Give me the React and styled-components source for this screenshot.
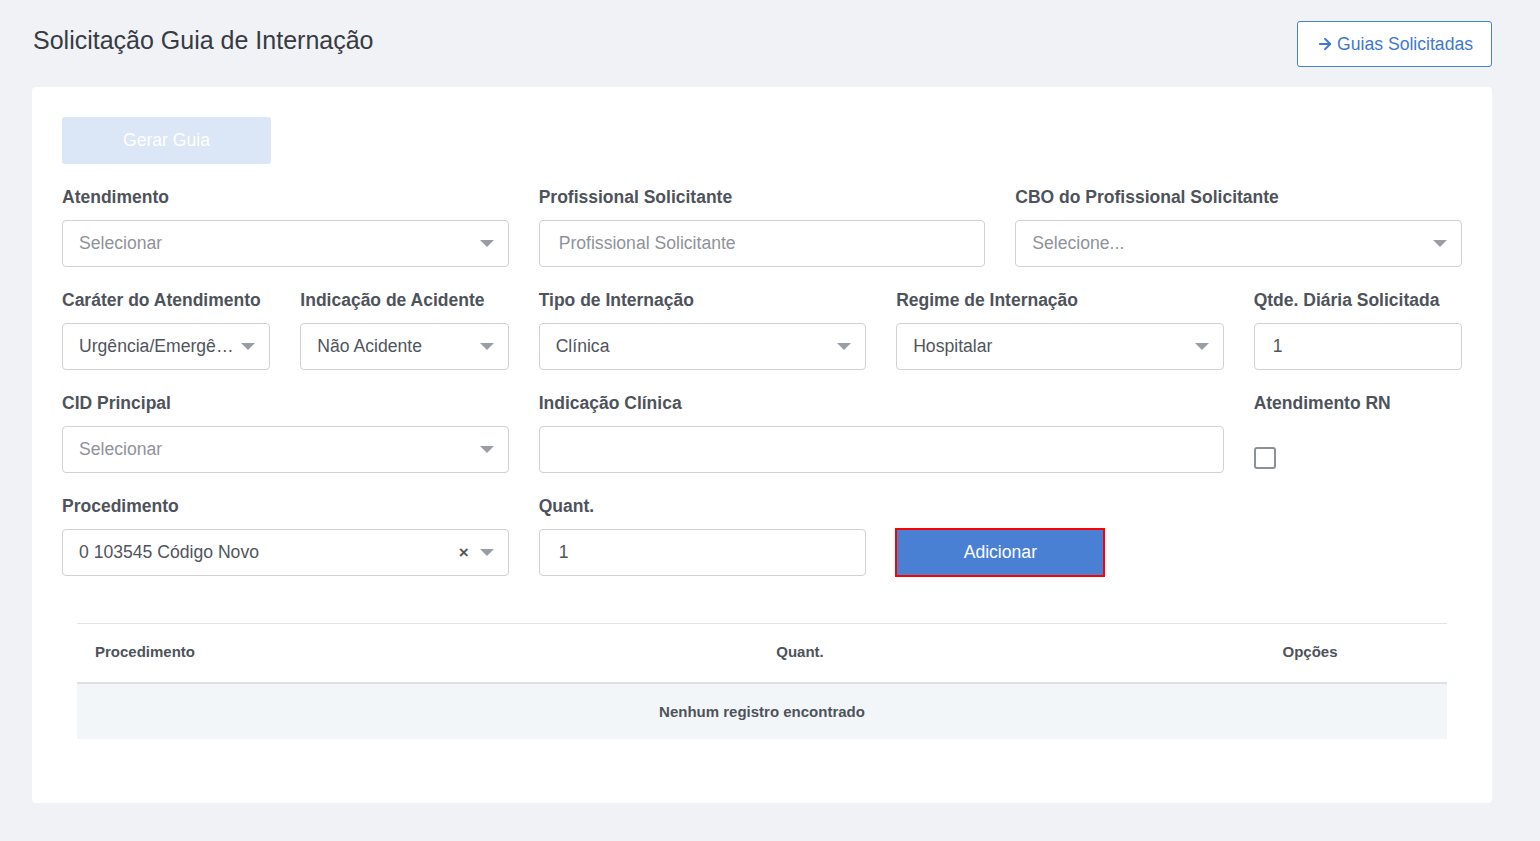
import React from 'react';
import styled, { createGlobalStyle } from 'styled-components';
import { ArrowRight } from 'lucide-react';

const GlobalStyle = createGlobalStyle`
  * { box-sizing: border-box; }
  body {
    margin: 0;
    background: #f1f2f5;
    font-family: "Liberation Sans", Arial, sans-serif;
  }
`;

const Page = styled.div`
  padding: 21px 48px 38px 32px;
  min-height: 841px;
`;

const TopBar = styled.div`
  display: flex;
  align-items: flex-start;
  justify-content: space-between;
  margin-bottom: 20px;
`;

const Title = styled.h1`
  margin: 5px 0 0 1px;
  font-size: 25px;
  font-weight: 400;
  color: #363b44;
  line-height: 28px;
`;

const OutlineButton = styled.button`
  display: flex;
  align-items: center;
  gap: 3px;
  height: 46px;
  padding: 0 18px;
  background: #fff;
  border: 1px solid #4a80d2;
  border-radius: 3px;
  color: #3f78cf;
  font-family: inherit;
  font-size: 17.6px;
`;

const Card = styled.div`
  background: #fff;
  border-radius: 4px;
  padding: 30px 30px 64px;
`;

const PrimaryButton = styled.button`
  width: 209px;
  height: 47px;
  border: 0;
  border-radius: ${({ $focused }) => ($focused ? '0' : '3px')};
  background: ${({ $disabled }) => ($disabled ? '#dbe6f6' : '#4a80d4')};
  color: #fff;
  font-family: inherit;
  font-size: 17.6px;
  outline: none;
  ${({ $focused }) => $focused && 'box-shadow: 0 0 0 1px #ff0000, inset 0 0 0 1px #ff0000;'}
`;

const FormGrid = styled.div`
  display: grid;
  grid-template-columns: repeat(12, 1fr);
  column-gap: 30px;
  row-gap: 20px;
  margin-top: 20px;
`;

const Field = styled.div`
  grid-column: span ${({ $span }) => $span};
  display: flex;
  flex-direction: column;
`;

const Label = styled.label`
  font-size: 17.5px;
  font-weight: 700;
  color: #4e535b;
  line-height: 24px;
  height: 24px;
  margin-bottom: 12px;
  padding-top: 1px;
  white-space: nowrap;
`;

const InputBox = styled.div`
  height: 47px;
  border: 1px solid #cfd2d6;
  border-radius: 4px;
  display: flex;
  align-items: center;
  padding: 0 14px 0 16px;
  font-size: 17.6px;
  color: ${({ $placeholder }) => ($placeholder ? '#8f9399' : '#50555c')};
  background: #fff;
`;

const Value = styled.span`
  flex: 1;
  min-width: 0;
  white-space: nowrap;
  overflow: hidden;
  text-overflow: ellipsis;
  padding-left: ${({ $pad }) => $pad || 0}px;
`;

const Caret = styled.span`
  width: 0;
  height: 0;
  border-left: 7px solid transparent;
  border-right: 7px solid transparent;
  border-top: 7px solid #999ea4;
  flex-shrink: 0;
  margin-left: ${({ $gap }) => ($gap === undefined ? 8 : $gap)}px;
`;

const Clear = styled.span`
  font-size: 17px;
  font-weight: 700;
  color: #555;
  line-height: 1;
  margin-right: 3px;
`;

const CheckWrap = styled.div`
  height: 47px;
  display: flex;
  align-items: center;
  padding-top: 16px;
`;

const Checkbox = styled.span`
  width: 22px;
  height: 22px;
  border: 2px solid #8a9098;
  border-radius: 3px;
`;

const ButtonCell = styled.div`
  height: 47px;
  display: flex;
`;

const Table = styled.table`
  width: calc(100% - 30px);
  margin: 47px 15px 0;
  border-collapse: collapse;
  font-size: 15px;
  color: #4e535b;
`;

const Th = styled.th`
  height: 59px;
  border-top: 1px solid #e1e3e6;
  border-bottom: 2px solid #dde0e4;
  font-weight: 700;
  text-align: ${({ $align }) => $align || 'center'};
  padding: 0 0 3px ${({ $align }) => ($align === 'left' ? '18px' : '0')};
  width: ${({ $w }) => $w || 'auto'};
`;

const EmptyCell = styled.td`
  height: 56px;
  background: #f3f6f9;
  text-align: center;
  font-weight: 700;
`;

const Select = ({ value, placeholder, clear, gap }) => (
  <InputBox $placeholder={!value}>
    <Value>{value || placeholder}</Value>
    {clear && <Clear>×</Clear>}
    <Caret $gap={gap} />
  </InputBox>
);

const Input = ({ value, placeholder, pad }) => (
  <InputBox $placeholder={!value}>
    <Value $pad={pad}>{value || placeholder}</Value>
  </InputBox>
);

export default function App() {
  return (
    <Page>
      <GlobalStyle />
      <TopBar>
        <Title>Solicitação Guia de Internação</Title>
        <OutlineButton>
          <ArrowRight size={18} strokeWidth={2.4} />
          Guias Solicitadas
        </OutlineButton>
      </TopBar>

      <Card>
        <PrimaryButton $disabled>Gerar Guia</PrimaryButton>

        <FormGrid>
          <Field $span={4}>
            <Label>Atendimento</Label>
            <Select placeholder="Selecionar" />
          </Field>
          <Field $span={4}>
            <Label>Profissional Solicitante</Label>
            <Input placeholder="Profissional Solicitante" pad={3} />
          </Field>
          <Field $span={4}>
            <Label>CBO do Profissional Solicitante</Label>
            <Select placeholder="Selecione..." />
          </Field>

          <Field $span={2}>
            <Label>Caráter do Atendimento</Label>
            <Select value="Urgência/Emergência" gap={0} />
          </Field>
          <Field $span={2}>
            <Label>Indicação de Acidente</Label>
            <Select value="Não Acidente" />
          </Field>
          <Field $span={3}>
            <Label>Tipo de Internação</Label>
            <Select value="Clínica" />
          </Field>
          <Field $span={3}>
            <Label>Regime de Internação</Label>
            <Select value="Hospitalar" />
          </Field>
          <Field $span={2}>
            <Label>Qtde. Diária Solicitada</Label>
            <Input value="1" pad={2} />
          </Field>

          <Field $span={4}>
            <Label>CID Principal</Label>
            <Select placeholder="Selecionar" />
          </Field>
          <Field $span={6}>
            <Label>Indicação Clínica</Label>
            <Input value="" />
          </Field>
          <Field $span={2}>
            <Label>Atendimento RN</Label>
            <CheckWrap>
              <Checkbox />
            </CheckWrap>
          </Field>

          <Field $span={4}>
            <Label>Procedimento</Label>
            <Select value="0 103545 Código Novo" clear />
          </Field>
          <Field $span={3}>
            <Label>Quant.</Label>
            <Input value="1" pad={3} />
          </Field>
          <Field $span={2}>
            <Label />
            <ButtonCell>
              <PrimaryButton $focused>Adicionar</PrimaryButton>
            </ButtonCell>
          </Field>
        </FormGrid>

        <Table>
          <thead>
            <tr>
              <Th $align="left" $w="350px">Procedimento</Th>
              <Th $w="746px">Quant.</Th>
              <Th>Opções</Th>
            </tr>
          </thead>
          <tbody>
            <tr>
              <EmptyCell colSpan={3}>Nenhum registro encontrado</EmptyCell>
            </tr>
          </tbody>
        </Table>
      </Card>
    </Page>
  );
}
